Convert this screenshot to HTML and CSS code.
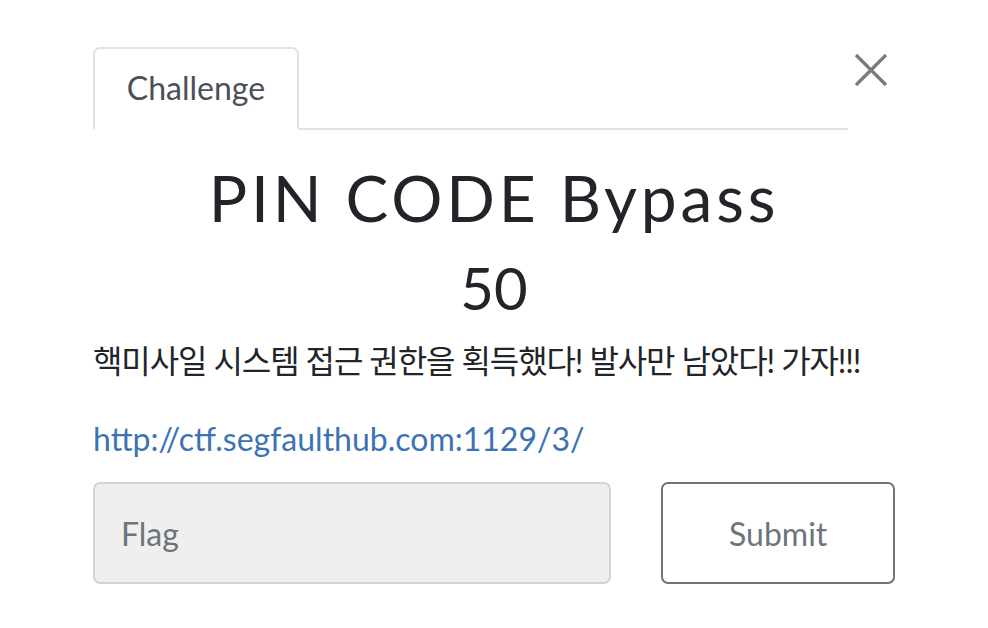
FILE: index.html
```html
<!DOCTYPE html>
<html lang="ko">
<head>
<meta charset="utf-8">
<title>Challenge</title>
<link rel="stylesheet" href="styles.css">
</head>
<body>
<div class="modal">
  <div class="modal-head">
    <ul class="tabs">
      <li class="tab active">Challenge</li>
    </ul>
    <button class="close" aria-label="Close">
      <svg width="34" height="34" viewBox="0 0 34 34"><path d="M2 2 L32 32 M32 2 L2 32" stroke="#7b7b7b" stroke-width="3.2" fill="none"/></svg>
    </button>
  </div>
  <h2 class="title">PIN CODE Bypass</h2>
  <h3 class="value">50</h3>
  <p class="desc ko">핵미사일 시스템 접근 권한을 획득했다! 발사만 남았다! 가자!!!</p>
  <p class="desc"><a class="link" href="#">http://ctf.segfaulthub.com:1129/3/</a></p>
  <form class="submit-row">
    <input class="flag-input" type="text" placeholder="Flag">
    <button class="submit-btn" type="button">Submit</button>
  </form>
</div>
</body>
</html>
```
FILE: styles.css
```css
html, body {
  margin: 0;
  padding: 0;
  background: #ffffff;
}
body {
  font-family: Lato, "Noto Sans CJK KR", sans-serif;
  color: #212529;
}
.modal {
  width: 802px;
  margin-left: 93px;
  padding-top: 47px;
}
.modal-head {
  display: flex;
  align-items: flex-start;
}
.tabs {
  flex: 1;
  list-style: none;
  margin: 0;
  padding: 0;
  display: flex;
  border-bottom: 2px solid #dfe2e6;
}
.tab {
  box-sizing: border-box;
  height: 83px;
  width: 206px;
  margin-bottom: -2px;
  border: 2px solid #dfe2e6;
  border-bottom-color: #ffffff;
  border-radius: 7px 7px 0 0;
  font-size: 32px;
  line-height: 48px;
  color: #495057;
  display: flex;
  align-items: center;
  justify-content: center;
  padding-bottom: 2px;
}
.close {
  width: 47px;
  height: 60px;
  border: 0;
  background: none;
  padding: 6px 0 0 6px;
  display: flex;
  align-items: flex-start;
  justify-content: flex-start;
  cursor: pointer;
}
.title {
  margin: 30px 0 0;
  text-align: center;
  font-size: 64px;
  font-weight: 400;
  line-height: 1.2;
  letter-spacing: 3.8px;
}
.value {
  margin: 16px 0 0;
  text-align: center;
  font-size: 58px;
  font-weight: 400;
  line-height: 1.2;
}
.desc {
  margin: 15px 0 0;
  font-size: 32px;
  line-height: 48px;
}
.ko {
  letter-spacing: -1.1px;
}
.desc + .desc {
  margin-top: 30px;
}
.link {
  color: #3b73b4;
  text-decoration: none;
}
.submit-row {
  display: flex;
  gap: 50px;
  margin-top: 19px;
}
.flag-input {
  box-sizing: border-box;
  width: 519px;
  height: 102px;
  border: 2px solid #d4d4d4;
  border-radius: 7px;
  background: #efefef;
  padding: 0 26px;
  font-family: Lato, sans-serif;
  font-size: 32px;
  color: #495057;
  outline: none;
}
.flag-input::placeholder {
  color: #6c757d;
  opacity: 1;
}
.submit-btn {
  box-sizing: border-box;
  width: 234px;
  height: 102px;
  border: 2px solid #6c757d;
  border-radius: 7px;
  background: #ffffff;
  font-family: Lato, sans-serif;
  font-size: 32px;
  color: #6c757d;
  cursor: pointer;
}
```
